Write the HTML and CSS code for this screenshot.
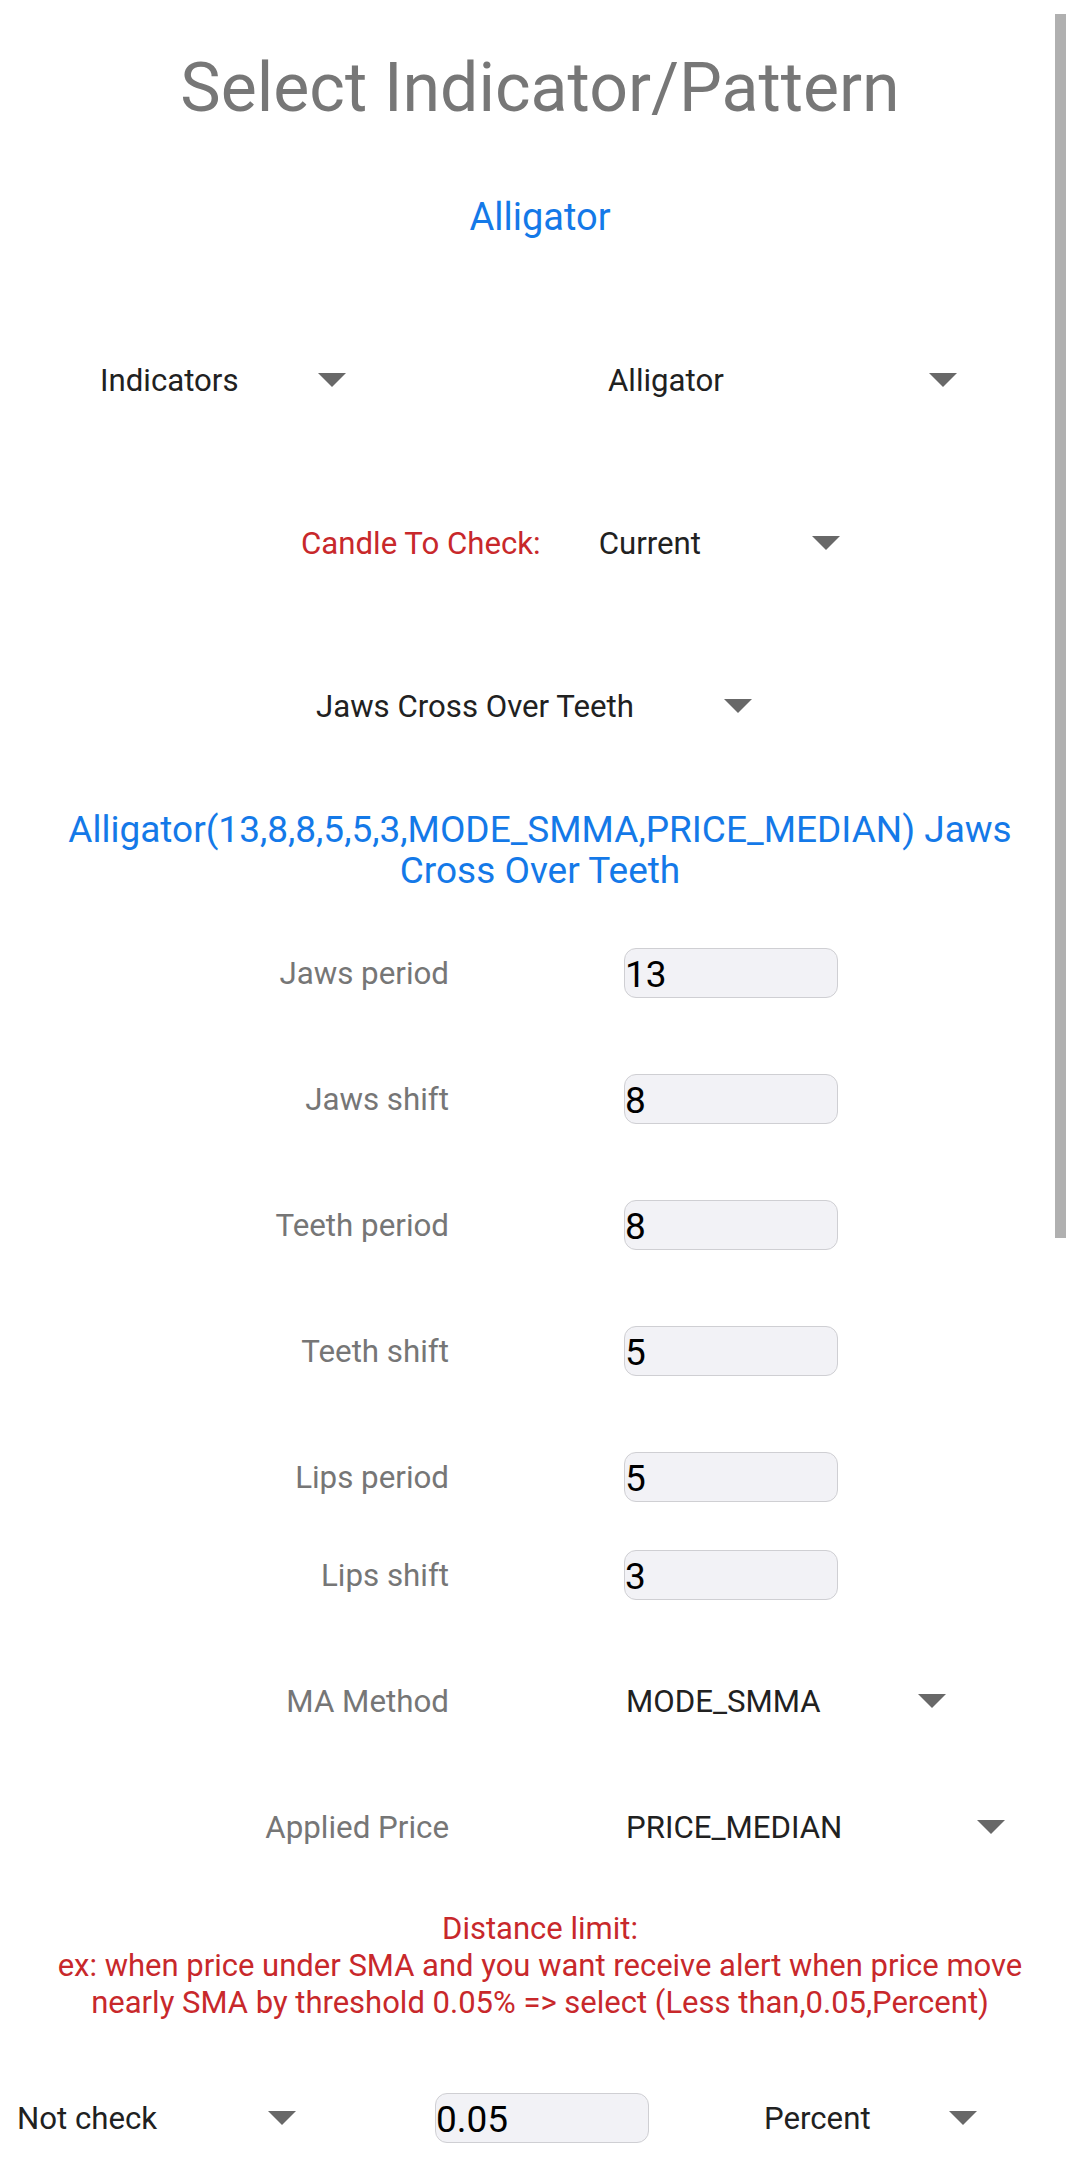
FILE: index.html
```html
<!DOCTYPE html>
<html>
<head>
<meta charset="utf-8">
<link rel="stylesheet" href="styles.css">
</head>
<body>
<div class="page">
  <h1 class="title">Select Indicator/Pattern</h1>
  <div class="subtitle">Alligator</div>

  <div class="row row-top">
    <div class="dd dd-ind"><span>Indicators</span><i class="tri"></i></div>
    <div class="dd dd-all"><span>Alligator</span><i class="tri"></i></div>
  </div>

  <div class="row row-candle">
    <span class="red-label">Candle To Check:</span>
    <div class="dd dd-cur"><span>Current</span><i class="tri"></i></div>
  </div>

  <div class="row row-jaws">
    <div class="dd dd-jaws"><span>Jaws Cross Over Teeth</span><i class="tri"></i></div>
  </div>

  <div class="desc">Alligator(13,8,8,5,5,3,MODE_SMMA,PRICE_MEDIAN) Jaws<br>Cross Over Teeth</div>

  <div class="params">
    <div class="prow"><span class="plabel">Jaws period</span><div class="inp">13</div></div>
    <div class="prow"><span class="plabel">Jaws shift</span><div class="inp">8</div></div>
    <div class="prow"><span class="plabel">Teeth period</span><div class="inp">8</div></div>
    <div class="prow"><span class="plabel">Teeth shift</span><div class="inp">5</div></div>
    <div class="prow"><span class="plabel">Lips period</span><div class="inp">5</div></div>
    <div class="prow prow-tight"><span class="plabel">Lips shift</span><div class="inp">3</div></div>
    <div class="prow"><span class="plabel">MA Method</span><div class="dd dd-ma"><span>MODE_SMMA</span><i class="tri"></i></div></div>
    <div class="prow"><span class="plabel">Applied Price</span><div class="dd dd-ap"><span>PRICE_MEDIAN</span><i class="tri"></i></div></div>
  </div>

  <div class="dist">Distance limit:<br>ex: when price under SMA and you want receive alert when price move<br>nearly SMA by threshold 0.05% =&gt; select (Less than,0.05,Percent)</div>

  <div class="row row-bottom">
    <div class="dd dd-nc"><span>Not check</span><i class="tri"></i></div>
    <div class="inp inp-val">0.05</div>
    <div class="dd dd-pc"><span>Percent</span><i class="tri"></i></div>
  </div>
</div>
<div class="scrollbar"></div>
</body>
</html>
```

FILE: styles.css
```css
html, body {
  margin: 0;
  padding: 0;
  background: #ffffff;
}
body {
  width: 1080px;
  height: 2167px;
  overflow: hidden;
  position: relative;
  font-family: Roboto, "Noto Sans", "Liberation Sans", sans-serif;
  color: #212121;
}
.page {
  padding-top: 48px;
}
.title {
  margin: 0;
  font-size: 68px;
  font-weight: 400;
  line-height: 80px;
  color: #777777;
  text-align: center;
}
.subtitle {
  margin-top: 67px;
  font-size: 38px;
  line-height: 44px;
  color: #1479e8;
  text-align: center;
}
.row {
  display: flex;
  align-items: center;
  height: 40px;
}
.row-top { margin-top: 121px; }
.row-candle { margin-top: 123px; }
.row-jaws { margin-top: 123px; }

.dd {
  display: flex;
  align-items: center;
  justify-content: space-between;
  font-size: 31.2px;
  color: #212121;
  height: 40px;
}
.tri {
  display: block;
  width: 0;
  height: 0;
  border-left: 14px solid transparent;
  border-right: 14px solid transparent;
  border-top: 14px solid #686868;
}
.dd-ind { margin-left: 100px; width: 246px; }
.dd-all { margin-left: 262px; width: 349px; }

.red-label {
  margin-left: 301px;
  font-size: 31.2px;
  color: #c8282b;
}
.dd-cur { margin-left: 58px; width: 241px; }
.dd-jaws { margin-left: 316px; width: 436px; }

.desc {
  margin-top: 83px;
  font-size: 37px;
  line-height: 41px;
  color: #1479e8;
  text-align: center;
}

.params {
  margin-top: 57px;
  display: flex;
  flex-direction: column;
  gap: 76px;
}
.prow {
  display: flex;
  align-items: center;
  height: 50px;
}
.prow-tight { margin-top: -28px; }
.plabel {
  width: 449px;
  text-align: right;
  font-size: 31.3px;
  color: #767676;
  flex: none;
}
.inp {
  box-sizing: border-box;
  margin-left: 175px;
  width: 214px;
  height: 50px;
  border: 1.5px solid #cfcfd3;
  border-radius: 12px;
  background: #f2f2f6;
  font-size: 37px;
  line-height: 51px;
  color: #000000;
  padding-left: 0;
}
.dd-ma { margin-left: 177px; width: 320px; }
.dd-ap { margin-left: 177px; width: 379px; }

.dist {
  margin-top: 58px;
  font-size: 31px;
  line-height: 37px;
  color: #c8282b;
  text-align: center;
}

.row-bottom {
  margin-top: 72px;
  height: 50px;
}
.dd-nc { margin-left: 17px; width: 279px; }
.inp-val { margin-left: 139px; width: 214px; }
.dd-pc { margin-left: 115px; width: 213px; }

.scrollbar {
  position: absolute;
  left: 1055px;
  top: 14px;
  width: 11px;
  height: 1224px;
  background: #b0b0b0;
}
```
